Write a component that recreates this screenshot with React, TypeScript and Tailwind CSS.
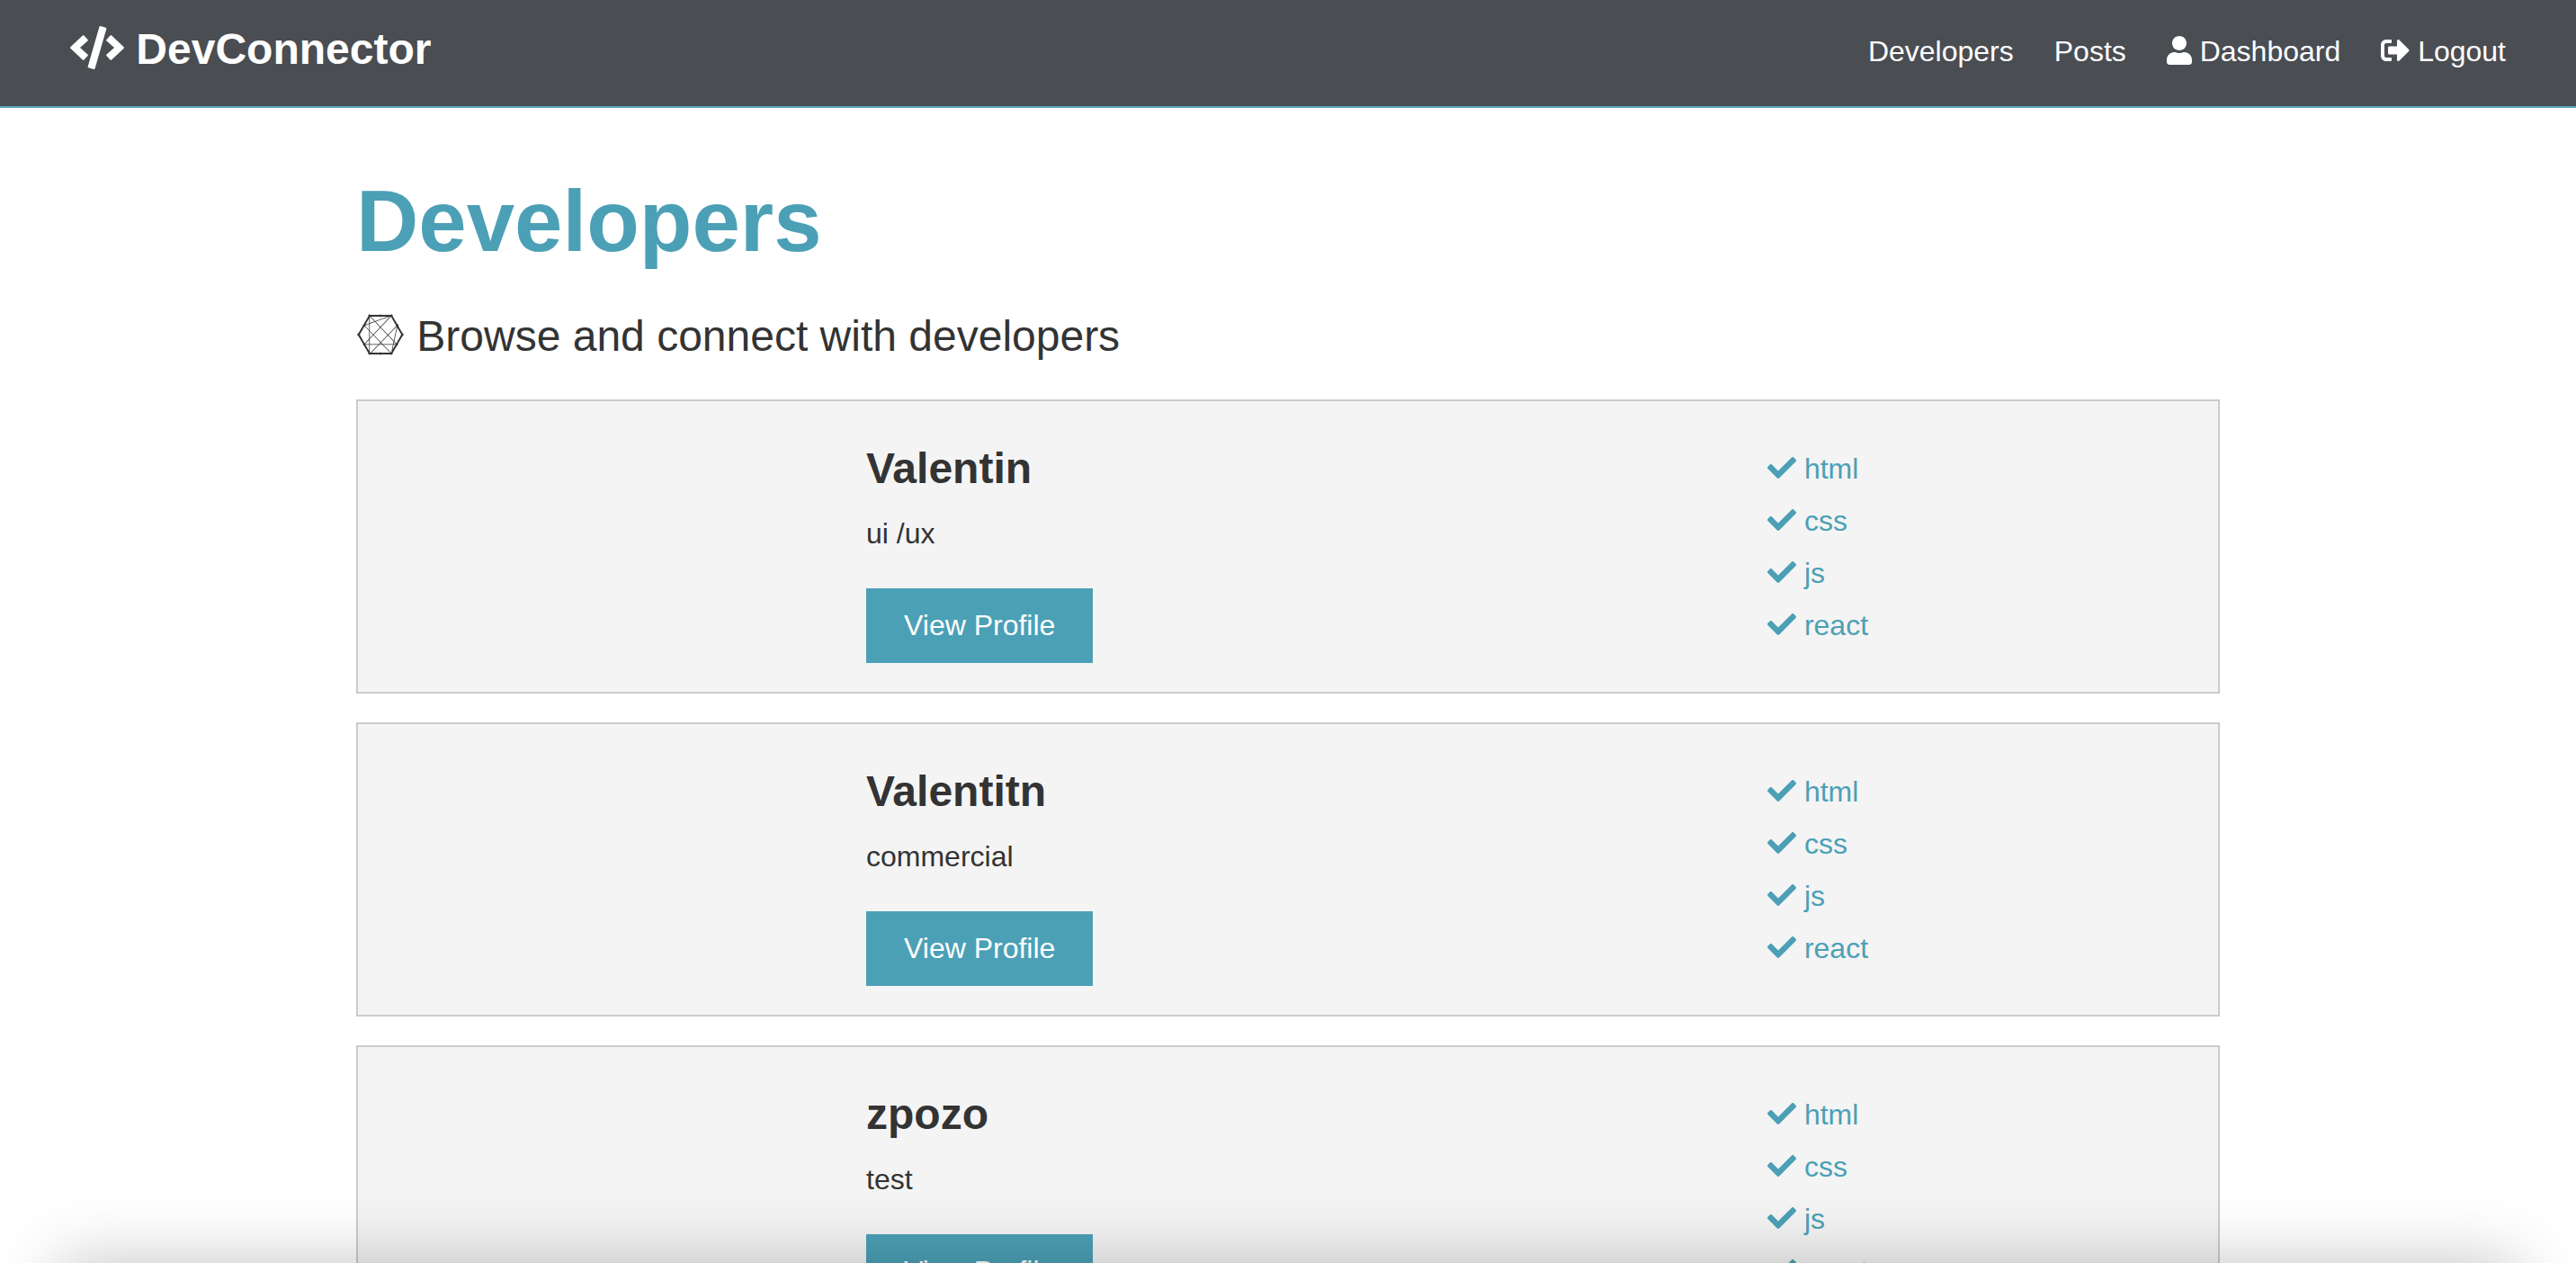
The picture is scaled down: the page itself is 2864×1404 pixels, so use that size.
import React from "react";
import { FaCheck, FaCode, FaConnectdevelop, FaSignOutAlt, FaUser } from "react-icons/fa";

type Developer = { name: string; status: string; skills: string[] };

const skills = ["html", "css", "js", "react"];

const developers: Developer[] = [
  { name: "Valentin", status: "ui /ux", skills },
  { name: "Valentitn", status: "commercial", skills },
  { name: "zpozo", status: "test", skills },
];

function Navbar() {
  return (
    <nav className="flex h-[120px] items-center justify-between border-b-2 border-[#5ba9bd] bg-[#4a4d52] px-16 text-white">
      <h1 className="text-[48px] leading-[74px] font-bold whitespace-nowrap">
        <a href="#home" className="block px-3.5 pb-2">
          <FaCode className="inline h-12 w-[60px] align-[-6px]" /> DevConnector
        </a>
      </h1>
      <ul className="flex gap-[17px] pb-1 text-[32px] leading-[52px] whitespace-nowrap">
        <li>
          <a href="#developers" className="px-3.5">Developers</a>
        </li>
        <li>
          <a href="#posts" className="px-3.5">Posts</a>
        </li>
        <li>
          <a href="#dashboard" className="px-3.5">
            <FaUser className="inline h-8 w-7 align-[-4px]" /> Dashboard
          </a>
        </li>
        <li>
          <a href="#logout" className="px-3.5">
            <FaSignOutAlt className="inline h-8 w-8 align-[-4px]" /> Logout
          </a>
        </li>
      </ul>
    </nav>
  );
}

function ProfileCard({ developer }: { developer: Developer }) {
  return (
    <article className="grid grid-cols-[2fr_4fr_2fr] items-center gap-16 border-2 border-[#cccccc] bg-[#f4f4f4] p-8 text-[32px] leading-[58px]">
      <div />
      <div>
        <h2 className="text-[48px] leading-[86px] font-bold">{developer.name}</h2>
        <p className="mb-8">{developer.status}</p>
        <a
          href="#profile"
          className="block w-fit bg-[#4ca0b6] px-[42px] py-3 leading-[59px] text-white"
        >
          View Profile
        </a>
      </div>
      <ul className="text-[#4ca0b6]">
        {developer.skills.map((skill) => (
          <li key={skill}>
            <FaCheck className="inline h-8 w-8 align-[-4px]" /> {skill}
          </li>
        ))}
      </ul>
    </article>
  );
}

export default function App() {
  return (
    <div className="h-screen overflow-hidden bg-white font-['Liberation_Sans',Arial,sans-serif] text-[#333333]">
      <Navbar />
      <main className="mx-auto max-w-[2200px] px-16 pt-[68px]">
        <h1 className="mb-8 text-[96px] leading-[115px] font-bold text-[#4ca0b6]">Developers</h1>
        <p className="mb-8 text-[48px] leading-[77px]">
          <FaConnectdevelop className="inline h-12 w-[54px] align-[-6px]" /> Browse and connect with
          developers
        </p>
        <div className="flex flex-col gap-8">
          {developers.map((developer) => (
            <ProfileCard key={developer.name} developer={developer} />
          ))}
        </div>
      </main>
      <div className="pointer-events-none fixed inset-x-16 top-full h-40 shadow-[0_0_75px_rgba(0,0,0,0.24)]" />
    </div>
  );
}
